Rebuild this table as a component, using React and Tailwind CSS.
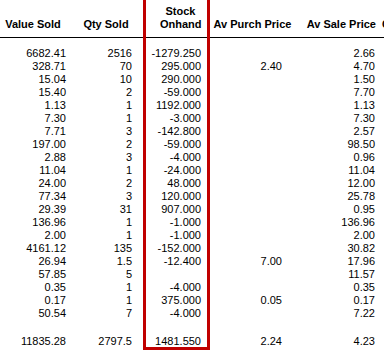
import React from 'react'

const rows = [
    ['6682.41', '2516', '-1279.250', '', '2.66'],
    ['328.71', '70', '295.000', '2.40', '4.70'],
    ['15.04', '10', '290.000', '', '1.50'],
    ['15.40', '2', '-59.000', '', '7.70'],
    ['1.13', '1', '1192.000', '', '1.13'],
    ['7.30', '1', '-3.000', '', '7.30'],
    ['7.71', '3', '-142.800', '', '2.57'],
    ['197.00', '2', '-59.000', '', '98.50'],
    ['2.88', '3', '-4.000', '', '0.96'],
    ['11.04', '1', '-24.000', '', '11.04'],
    ['24.00', '2', '48.000', '', '12.00'],
    ['77.34', '3', '120.000', '', '25.78'],
    ['29.39', '31', '907.000', '', '0.95'],
    ['136.96', '1', '-1.000', '', '136.96'],
    ['2.00', '1', '-1.000', '', '2.00'],
    ['4161.12', '135', '-152.000', '', '30.82'],
    ['26.94', '1.5', '-12.400', '7.00', '17.96'],
    ['57.85', '5', '', '', '11.57'],
    ['0.35', '1', '-4.000', '', '0.35'],
    ['0.17', '1', '375.000', '0.05', '0.17'],
    ['50.54', '7', '-4.000', '', '7.22'],
]

const totals = ['11835.28', '2797.5', '1481.550', '2.24', '4.23']

function Row({ cells }) {
    return (
        <div className="flex h-[13px] leading-[13px] whitespace-nowrap">
            <div className="w-[70px] shrink-0 pr-1 text-right">{cells[0]}</div>
            <div className="w-[66px] shrink-0 pr-1 text-right">{cells[1]}</div>
            <div className="w-[72px] shrink-0 pr-[7px] text-right">{cells[2]}</div>
            <div className="w-[89px] shrink-0 pr-[15px] text-right">{cells[3]}</div>
            <div className="w-[80px] shrink-0 pr-[2px] text-right">{cells[4]}</div>
        </div>
    )
}

export default function App() {
    return (
        <div
            className="relative w-[384px] h-[356px] overflow-hidden bg-white text-black text-[11px]"
            style={{ fontFamily: '"Liberation Sans", Arial, sans-serif' }}
        >
            {/* header */}
            <div className="flex items-end pt-[5px] pb-[6px] border-b border-black font-bold leading-[13px] whitespace-nowrap">
                <div className="w-[70px] shrink-0 pr-1 text-center">Value Sold</div>
                <div className="w-[66px] shrink-0 pl-[10px] pr-1 text-center">Qty Sold</div>
                <div className="w-[72px] shrink-0 pl-[24px] pr-[7px] text-center">
                    <div>Stock</div>
                    <div>Onhand</div>
                </div>
                <div className="w-[89px] shrink-0 text-center">Av Purch Price</div>
                <div className="w-[80px] shrink-0 pr-[1px] text-right">Av Sale Price</div>
                <div className="shrink-0 pl-[5px]">Cost</div>
            </div>

            {/* rows */}
            <div className="pt-[9px]">
                {rows.map((r, i) => (
                    <Row key={i} cells={r} />
                ))}
                <div className="h-[15px]" />
                <Row cells={totals} />
            </div>

            {/* highlight box */}
            <div className="absolute left-[143px] top-[-10px] w-[67px] h-[360px] border-[3px] border-[#c00000] pointer-events-none" />
        </div>
    )
}
